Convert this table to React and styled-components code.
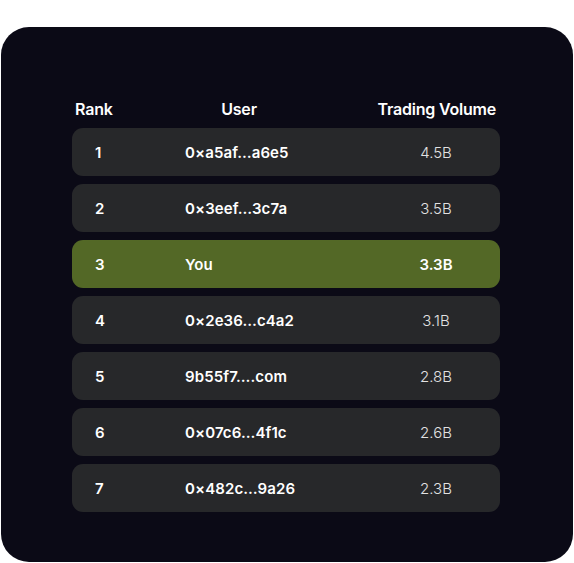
import React from 'react';
import styled, { createGlobalStyle } from 'styled-components';

const rows = [
	{ rank: 1, user: '0×a5af…a6e5', volume: '4.5B' },
	{ rank: 2, user: '0×3eef…3c7a', volume: '3.5B' },
	{ rank: 3, user: 'You', volume: '3.3B', me: true },
	{ rank: 4, user: '0×2e36…c4a2', volume: '3.1B' },
	{ rank: 5, user: '9b55f7….com', volume: '2.8B' },
	{ rank: 6, user: '0×07c6…4f1c', volume: '2.6B' },
	{ rank: 7, user: '0×482c…9a26', volume: '2.3B' },
];

export default function App() {
	return (
		<>
			<Global />
			<Card>
				<Board>
					<Header>
						<HeadRank>Rank</HeadRank>
						<HeadUser>User</HeadUser>
						<HeadVolume>Trading Volume</HeadVolume>
					</Header>
					<List>
						{rows.map((r) => (
							<Row key={r.rank} $me={r.me}>
								<Rank>{r.rank}</Rank>
								<User>{r.user}</User>
								<Volume $me={r.me}>{r.volume}</Volume>
							</Row>
						))}
					</List>
				</Board>
			</Card>
		</>
	);
}

const Global = createGlobalStyle`
	body {
		margin: 0;
		background: #ffffff;
		font-family: Inter, "Noto Sans", sans-serif;
	}
`;

const Card = styled.div`
	margin: 27px 1px 0 1px;
	height: 535px;
	box-sizing: border-box;
	background: #0b0a16;
	border-radius: 28px;
	padding: 71px 0 0 71px;
`;

const Board = styled.div`
	width: 428px;
`;

const Header = styled.div`
	display: flex;
	align-items: center;
	height: 22px;
	margin-bottom: 8px;
	color: #ffffff;
	font-size: 16px;
	font-weight: 600;
	letter-spacing: -0.2px;
`;

const HeadRank = styled.div`
	width: 60px;
	padding-left: 3px;
	box-sizing: border-box;
`;

const HeadUser = styled.div`
	width: 214px;
	text-align: center;
`;

const HeadVolume = styled.div`
	flex: 1;
	text-align: right;
	padding-right: 4px;
	white-space: nowrap;
`;

const List = styled.div`
	display: flex;
	flex-direction: column;
	gap: 8px;
`;

const Row = styled.div`
	display: grid;
	grid-template-columns: 90px 1fr 128px;
	align-items: center;
	height: 48px;
	padding-left: 23px;
	border-radius: 11px;
	background: ${(p) => (p.$me ? '#536826' : '#27282a')};
	color: #ffffff;
	font-size: 15px;
`;

const Rank = styled.div`
	font-weight: 600;
`;

const User = styled.div`
	font-weight: 600;
	letter-spacing: 0.1px;
`;

const Volume = styled.div`
	text-align: center;
	font-weight: ${(p) => (p.$me ? 600 : 300)};
	color: ${(p) => (p.$me ? '#ffffff' : '#e2e2e2')};
`;
